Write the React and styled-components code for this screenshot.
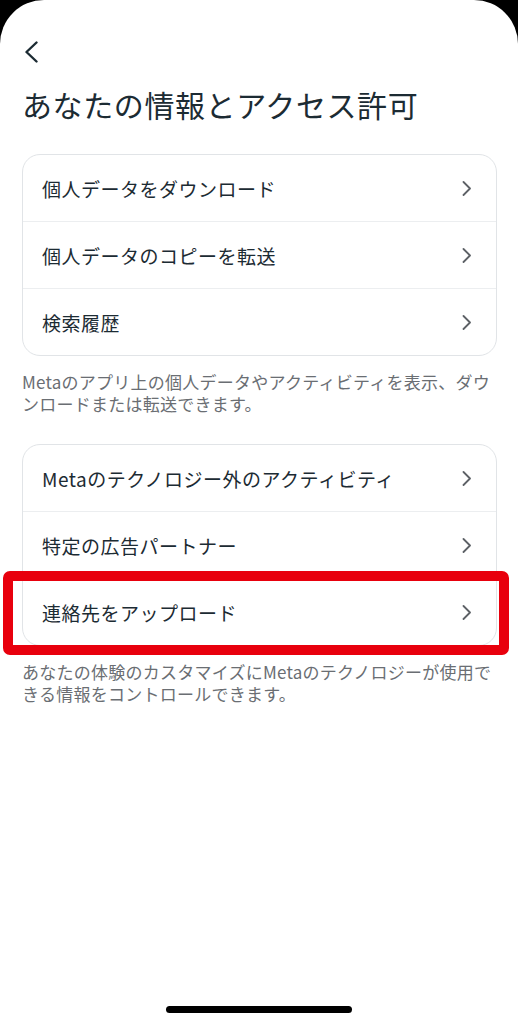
import React from "react";
import styled, { createGlobalStyle } from "styled-components";

const GlobalStyle = createGlobalStyle`
  html, body {
    margin: 0;
    padding: 0;
    background: #000;
  }
  body {
    font-family: "Noto Sans CJK JP", "Noto Sans", sans-serif;
    -webkit-font-smoothing: antialiased;
  }
`;

const Screen = styled.div`
  display: flex;
  flex-direction: column;
  min-height: 1024px;
  box-sizing: border-box;
  background: #fff;
  border-radius: 44px 44px 0 0;
  padding: 38px 21px 0 22px;
  color: #1c2b33;
`;

const BackButton = styled.button`
  display: flex;
  align-items: center;
  width: 28px;
  height: 28px;
  padding: 0 0 0 2px;
  border: none;
  background: none;
  color: #1c2b33;
  cursor: pointer;
`;

const Title = styled.h1`
  margin: 18px 0 30px;
  font-size: 30px;
  line-height: 40px;
  font-weight: 400;
  letter-spacing: 0.6px;
`;

const Card = styled.div`
  border: 1px solid #e1e4e7;
  border-radius: 18px;
  background: #fff;
`;

const Row = styled.div`
  position: relative;
  display: flex;
  align-items: center;
  justify-content: space-between;
  height: 66px;
  padding: 0 24px 0 19px;
  font-size: 19px;
  letter-spacing: 0.5px;
  & + & {
    border-top: 1px solid #eceef0;
  }
`;

const Chevron = styled.span`
  display: flex;
  color: #5d6166;
`;

const Highlight = styled.div`
  position: absolute;
  left: -20px;
  right: -13px;
  top: -8px;
  bottom: -10px;
  border: 10px solid #e8000d;
  border-radius: 7px;
  pointer-events: none;
`;

const Caption = styled.p`
  margin: 15px 0 29px;
  font-size: 17px;
  line-height: 22px;
  letter-spacing: 0.25px;
  color: #6a6e73;
`;

const HomeIndicator = styled.div`
  align-self: center;
  width: 186px;
  height: 7px;
  margin: auto 0 11px -1px;
  border-radius: 4px;
  background: #000;
`;

const ChevronRight = () => (
  <svg width="10" height="15" viewBox="0 0 10 15" fill="none">
    <path d="M1.5 1 L8 7.5 L1.5 14" stroke="currentColor" strokeWidth="1.8" strokeLinecap="round" strokeLinejoin="round" />
  </svg>
);

const ChevronLeft = () => (
  <svg width="15" height="22" viewBox="0 0 15 22" fill="none">
    <path d="M12.5 1.5 L2.5 11 L12.5 20.5" stroke="currentColor" strokeWidth="2.4" strokeLinecap="round" strokeLinejoin="round" />
  </svg>
);

const sections = [
  {
    items: ["個人データをダウンロード", "個人データのコピーを転送", "検索履歴"],
    caption: "Metaのアプリ上の個人データやアクティビティを表示、ダウンロードまたは転送できます。",
  },
  {
    items: ["Metaのテクノロジー外のアクティビティ", "特定の広告パートナー", "連絡先をアップロード"],
    caption: "あなたの体験のカスタマイズにMetaのテクノロジーが使用できる情報をコントロールできます。",
    highlight: "連絡先をアップロード",
  },
];

export default function App() {
  return (
    <>
      <GlobalStyle />
      <Screen>
        <BackButton aria-label="戻る">
          <ChevronLeft />
        </BackButton>
        <Title>あなたの情報とアクセス許可</Title>
        {sections.map((section, i) => (
          <React.Fragment key={i}>
            <Card>
              {section.items.map((item) => (
                <Row key={item}>
                  <span>{item}</span>
                  <Chevron>
                    <ChevronRight />
                  </Chevron>
                  {section.highlight === item && <Highlight />}
                </Row>
              ))}
            </Card>
            <Caption>{section.caption}</Caption>
          </React.Fragment>
        ))}
        <HomeIndicator />
      </Screen>
    </>
  );
}
